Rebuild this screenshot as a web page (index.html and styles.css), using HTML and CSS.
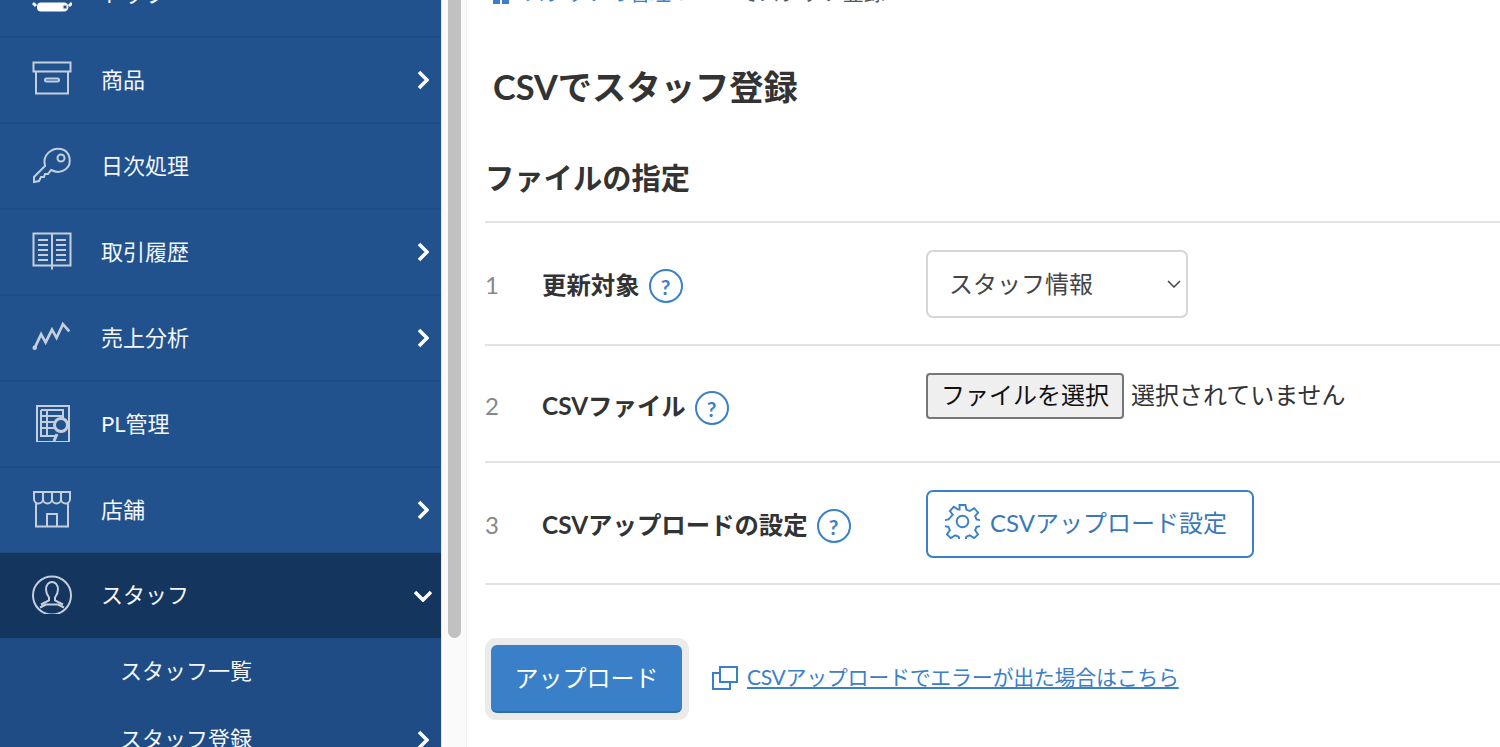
FILE: index.html
```html
<!DOCTYPE html>
<html lang="ja">
<head>
    <meta charset="UTF-8">
    <meta name="viewport" content="width=device-width, initial-scale=1.0">
    <title>CSVでスタッフ登録</title>
    <link rel="stylesheet" href="styles.css">
</head>
<body>
    <div class="page">
        <!-- Sidebar -->
        <nav class="sidebar">
            <a class="nav-item">
                <svg class="nav-icon" viewBox="0 0 40 40"><path class="solid" d="M5 34.500a4 4 0 0 1 4-4h23a4 4 0 0 1 0 9h-23a4 4 0 0 1-4-4z"/><circle class="dot" cx="33" cy="35" r="2"/><path d="M1 31l3 3M40 31l-3 3"/></svg>
                <span>トップ</span>
            </a>
            <a class="nav-item">
                <svg class="nav-icon" viewBox="0 0 40 40"><path d="M1.500 4.500h37v9h-37zM4 13.500v22h32v-22M14.500 20.500h11a1.500 1.500 0 0 1 0 3h-11a1.500 1.500 0 0 1 0-3z"/></svg>
                <span>商品</span>
                <svg class="chevron" viewBox="0 0 12 20"><path d="M2 2l8 8-8 8"/></svg>
            </a>
            <a class="nav-item">
                <svg class="nav-icon" viewBox="0 0 40 40"><path d="M13 22C10 11 20 3 29 5c10 2 11 15 5 20-5 4-11 3-15 1l-3 4h-3l-1 3h-3l-2 4-5 1v-5z"/><circle cx="29" cy="14" r="3.500"/></svg>
                <span>日次処理</span>
            </a>
            <a class="nav-item">
                <svg class="nav-icon" viewBox="0 0 40 40"><path d="M1.500 3.500h37v32h-37zM20 3.500v36M6 10h10M6 15h10M6 20h10M6 25h10M6 30h10M24 10h10M24 15h10M24 20h10M24 25h10M24 30h10"/></svg>
                <span>取引履歴</span>
                <svg class="chevron" viewBox="0 0 12 20"><path d="M2 2l8 8-8 8"/></svg>
            </a>
            <a class="nav-item">
                <svg class="nav-icon" viewBox="0 0 44 40"><path class="thick" d="M3 33l7-15 5 9 7-14 5 9 7-15 7 8"/><circle class="solid" cx="3" cy="33" r="2.500"/></svg>
                <span>売上分析</span>
                <svg class="chevron" viewBox="0 0 12 20"><path d="M2 2l8 8-8 8"/></svg>
            </a>
            <a class="nav-item">
                <svg class="nav-icon" viewBox="0 0 40 40"><path d="M5 4h32v36H5zM9 8h22v8M9 8v26h14M9 14h22M9 20h14M9 26h14M15 8v26"/><circle class="ring" cx="29" cy="23" r="6.500"/><path class="thick" d="M25 32l-3 7"/></svg>
                <span>PL管理</span>
            </a>
            <a class="nav-item">
                <svg class="nav-icon" viewBox="0 0 40 40"><path d="M2 4h36v7c0 6-9 6-9 0 0 6-9 6-9 0 0 6-9 6-9 0 0 6-9 6-9 0zM11 4v7M20 4v7M29 4v7M4 14v24.500h32V14M15 38.500V26h10v12.500"/></svg>
                <span>店舗</span>
                <svg class="chevron" viewBox="0 0 12 20"><path d="M2 2l8 8-8 8"/></svg>
            </a>
            <a class="nav-item active">
                <svg class="nav-icon" viewBox="0 0 40 40"><circle cx="20" cy="21.500" r="19"/><path d="M14 15.500c0-10 12-10 12 0 0 4-1.500 6-3 8v3l8 4M14 15.500c0 4 1.500 6 3 8v3l-8 4M8 33.500l6-3h12l6 3"/></svg>
                <span>スタッフ</span>
                <svg class="chevron down" viewBox="0 0 20 12"><path d="M2 2l8 8 8-8"/></svg>
            </a>
            <div class="sub-nav">
                <a class="sub-item"><span>スタッフ一覧</span></a>
                <a class="sub-item">
                    <span>スタッフ登録</span>
                    <svg class="chevron" viewBox="0 0 12 20"><path d="M2 2l8 8-8 8"/></svg>
                </a>
            </div>
        </nav>

        <!-- Scrollbar of the sidebar -->
        <div class="scroll-track"><div class="scroll-thumb"></div></div>

        <!-- Main content -->
        <main class="content">
            <div class="breadcrumb">
                <svg class="home-icon" viewBox="0 0 18 18"><path d="M1 0h7v18H1zM10 0h7v18h-7z"/></svg>
                <a>スタッフの管理</a>
                <span class="crumb-sep">/</span>
                <span>CSVでスタッフ登録</span>
            </div>

            <h1>CSVでスタッフ登録</h1>
            <h2>ファイルの指定</h2>

            <div class="form-list">
                <div class="form-row">
                    <div class="row-num">1</div>
                    <div class="row-label">更新対象<span class="help">?</span></div>
                    <div class="select-wrap">
                        <select class="select">
                            <option>スタッフ情報</option>
                        </select>
                        <svg class="select-arrow" viewBox="0 0 14 8"><path d="M1 1l6 6 6-6"/></svg>
                    </div>
                </div>
                <div class="form-row file-row">
                    <div class="row-num">2</div>
                    <div class="row-label">CSVファイル<span class="help">?</span></div>
                    <div class="file-field">
                        <button class="file-button">ファイルを選択</button>
                        <span class="file-name">選択されていません</span>
                    </div>
                </div>
                <div class="form-row last-row">
                    <div class="row-num">3</div>
                    <div class="row-label">CSVアップロードの設定<span class="help">?</span></div>
                    <a class="settings-button">
                        <svg class="gear" viewBox="0 0 36 36"><path d="M15 0h6l1 5 3.500 1.500 4.500-3 4 4.500-3 4 1.500 3.500 5 1v6l-5 1-1.500 3.500 3 4.500-4 4-4.500-3-3.500 1.500-1 5h-6l-1-5-3.500-1.500-4.500 3-4-4 3-4.500-1.500-3.500-5-1v-6l5-1L8 10.500l-3-4 4-4.500 4.500 3L15 5z" transform="translate(0 1) scale(1 .96)"/><circle cx="18" cy="18" r="6"/></svg>
                        CSVアップロード設定
                    </a>
                </div>
            </div>

            <div class="actions">
                <div class="upload-ring"><button class="upload-button">アップロード</button></div>
                <svg class="window-icon" viewBox="0 0 26 24"><path d="M8 1h17v15H8zM8 7H1v16h17v-7"/></svg>
                <a class="error-link">CSVアップロードでエラーが出た場合はこちら</a>
            </div>
        </main>
    </div>
</body>
</html>
```

FILE: styles.css
```css
/* General Styles */
html, body {
    height: 100%;
    margin: 0;
    overflow: hidden;
}

body {
    background-color: #fff;
    color: #333;
    font-family: Lato, "Noto Sans CJK JP", sans-serif;
}

.page {
    display: flex;
    height: 747px;
    overflow: hidden;
}

/* Sidebar - the window is scrolled, first row is cut by the top edge */
.sidebar {
    flex: 0 0 441px;
    margin-top: -48px;
    height: 795px;
    overflow: hidden;
    background-color: #21528e;
    color: #f4f6f9;
    font-size: 22px;
}

.nav-item {
    display: flex;
    align-items: center;
    height: 84px;
    border-bottom: 2px solid #1e4b83;
    padding-left: 32px;
    padding-right: 12px;
}

.nav-item.active {
    background-color: #14355d;
    border-bottom: none;
    height: 85px;
    margin-top: -1px;
}

.nav-item span {
    flex: 1;
    padding-bottom: 5px;
    margin-left: -1px;
}

.nav-icon {
    width: 40px;
    height: 40px;
    margin-right: 30px;
    margin-top: -4px;
    fill: none;
    stroke: #c5cfdc;
    stroke-width: 2;
}

.nav-icon .solid {
    fill: #c5cfdc;
    stroke: none;
}

.nav-icon .thick {
    stroke-width: 3;
}

.nav-icon .ring {
    fill: #21528e;
    stroke-width: 3;
}

.nav-item:first-child .nav-icon {
    stroke: #fff;
    stroke-width: 3;
}

.nav-item:first-child .solid {
    fill: #fff;
}

.nav-item:first-child .dot {
    fill: #21528e;
    stroke: #c5cfdc;
    stroke-width: 1;
}

.chevron {
    width: 12px;
    height: 20px;
    fill: none;
    stroke: #fff;
    stroke-width: 3.5;
}

.chevron.down {
    width: 20px;
    height: 12px;
    margin-right: -4px;
}

.sub-nav {
    background-color: #1f4c84;
    height: 111px;
}

.sub-item {
    display: flex;
    align-items: center;
    height: 68px;
    padding-left: 120px;
    padding-right: 12px;
}

.sub-item span {
    flex: 1;
    padding-bottom: 7px;
}

/* Scrollbar */
.scroll-track {
    flex: 0 0 25px;
    box-sizing: border-box;
    background-color: #fafafa;
    border-left: 1px solid #e8e8e8;
    border-right: 1px solid #ededed;
    padding: 0 5px 0 6px;
}

.scroll-thumb {
    height: 638px;
    width: 13px;
    background-color: #c1c1c1;
    border-radius: 0 0 7px 7px;
}

/* Main content */
.content {
    flex: 1;
    padding-left: 18px;
    min-width: 0;
}

.breadcrumb {
    display: flex;
    align-items: center;
    height: 26px;
    margin-top: -22px;
    padding-left: 7px;
    font-size: 21px;
    color: #555;
}

.breadcrumb a {
    color: #3a80c8;
}

.home-icon {
    width: 18px;
    height: 18px;
    margin-top: 8px;
    margin-right: 14px;
    fill: #3a80c8;
}

.crumb-sep {
    margin: 0 9px;
    color: #999;
}

h1 {
    margin: 57px 0 0 8px;
    font-size: 34.3px;
    line-height: 52px;
    font-weight: bold;
}

h2 {
    margin: 40px 0 0;
    height: 68px;
    line-height: 50px;
    font-size: 29.3px;
    font-weight: bold;
    border-bottom: 2px solid #e2e2e2;
}

/* Form rows */
.form-row {
    display: grid;
    grid-template-columns: 57px 384px 1fr;
    align-items: center;
    padding: 27px 0 26px;
    border-bottom: 2px solid #e2e2e2;
}

.file-row {
    padding-bottom: 42px;
}

.last-row {
    padding-bottom: 25px;
}

.row-num {
    font-size: 24px;
    color: #888;
}

.row-label {
    display: flex;
    align-items: center;
    margin-top: -2px;
    font-size: 24.4px;
    font-weight: bold;
}

.file-row .row-num,
.file-row .row-label {
    position: relative;
    top: 9px;
}

.help {
    display: inline-flex;
    align-items: center;
    justify-content: center;
    box-sizing: border-box;
    width: 34px;
    height: 34px;
    margin-left: 9px;
    margin-top: 6px;
    border: 2px solid #3a80c8;
    border-radius: 50%;
    color: #3a80c8;
    font-size: 21px;
    font-weight: bold;
}

.file-row .help {
    margin-top: 8px;
}

.select-wrap {
    position: relative;
    width: 262px;
}

.select {
    display: block;
    width: 100%;
    height: 68px;
    appearance: none;
    box-sizing: border-box;
    padding: 0 21px 2px;
    border: 2px solid #d6d6d6;
    border-radius: 7px;
    background-color: #fff;
    color: #444;
    font-family: inherit;
    font-size: 24px;
}

.select-arrow {
    position: absolute;
    right: 7px;
    top: 30px;
    width: 14px;
    height: 8px;
    fill: none;
    stroke: #444;
    stroke-width: 1.500;
}

.file-field {
    display: flex;
    align-items: center;
    gap: 7px;
    font-size: 24px;
    color: #333;
}

.file-name {
    padding-bottom: 6px;
}

.file-button {
    box-sizing: border-box;
    width: 198px;
    height: 46px;
    padding: 0 0 5px;
    border: 2px solid #767676;
    border-radius: 4px;
    background-color: #efefef;
    color: #111;
    font-family: inherit;
    font-size: 24px;
}

.settings-button {
    display: flex;
    align-items: center;
    box-sizing: border-box;
    width: 328px;
    height: 68px;
    padding: 0 0 5px 17px;
    border: 2px solid #3a80c8;
    border-radius: 7px;
    color: #3a78b8;
    font-size: 24px;
}

.gear {
    width: 35px;
    height: 35px;
    margin-right: 10px;
    fill: none;
    stroke: #3a80c8;
    stroke-width: 2;
}

/* Upload */
.actions {
    display: flex;
    align-items: center;
    margin-top: 53px;
}

.upload-ring {
    padding: 7px 7px 7px 6px;
    background-color: #ebebeb;
    border-radius: 11px;
}

.upload-button {
    display: block;
    width: 191px;
    height: 68px;
    padding: 0 0 4px;
    border: none;
    border-bottom: 2px solid #2f6cad;
    border-radius: 6px;
    background-color: #3a80c9;
    color: #fff;
    font-family: inherit;
    font-size: 24px;
}

.window-icon {
    width: 26px;
    height: 24px;
    margin-left: 23px;
    margin-right: 9px;
    margin-bottom: 2px;
    fill: none;
    stroke: #3a80c8;
    stroke-width: 2;
}

.error-link {
    padding-bottom: 6px;
    color: #3a80c8;
    font-size: 21px;
    letter-spacing: -0.3px;
    text-decoration: underline;
}
```
